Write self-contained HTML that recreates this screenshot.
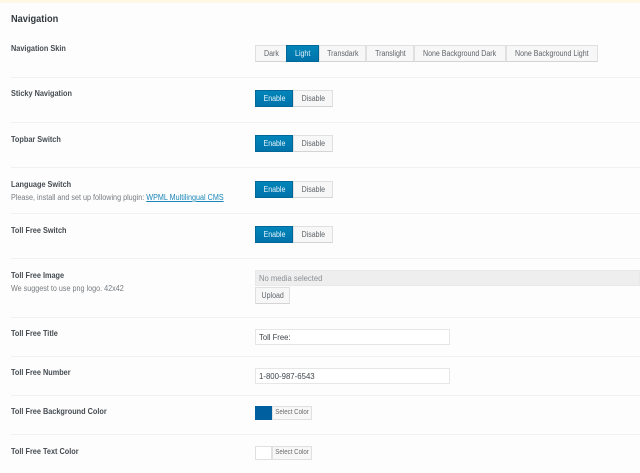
<!DOCTYPE html>
<html><head><meta charset="utf-8">
<style>
html,body{margin:0;padding:0;width:640px;height:473px;overflow:hidden;background:#fdfdfd;font-family:"Liberation Sans",sans-serif;}
body{position:relative;}
.a{position:absolute;white-space:nowrap;}
.band{left:0;top:0;width:640px;height:3px;background:#fff8e6;}
h2{position:absolute;left:11px;top:12.5px;margin:0;font-size:10.5px;line-height:13px;font-weight:bold;color:#32393f;transform:scaleX(.88);transform-origin:0 0;}
.l{position:absolute;left:11px;font-size:8.5px;line-height:11px;font-weight:bold;color:#454b50;white-space:nowrap;transform:scaleX(.86);transform-origin:0 0;}
.d{position:absolute;left:11px;font-size:8px;line-height:11px;color:#777c80;white-space:nowrap;transform:scaleX(.9);transform-origin:0 0;}
.d a{color:#1a86b8;text-decoration:underline;}
.s{position:absolute;left:11px;width:629px;height:1px;background:#f1f1f1;}
.b{position:absolute;box-sizing:border-box;height:17px;line-height:15px;text-align:center;font-size:8px;color:#5f6469;background:#f7f7f7;border:1px solid #e0e0e0;border-bottom-color:#d4d4d4;white-space:nowrap;}
.b span{display:inline-block;transform:scaleX(.88);}
.on{background:linear-gradient(#0085ba,#0073aa);border-color:#006799;color:#e6f3f9;}
.i{position:absolute;box-sizing:border-box;left:255px;width:195px;height:16px;background:#fff;border:1px solid #e6e6e6;font-size:8.5px;line-height:14px;padding-left:3px;color:#40464b;white-space:nowrap;}
.i span{display:inline-block;transform:scaleX(.9);transform-origin:0 0;}
.sel{position:absolute;box-sizing:border-box;left:272px;width:40px;height:14px;line-height:12px;background:#f7f7f7;border:1px solid #e0e0e0;font-size:7px;color:#6a6a6a;text-align:center;white-space:nowrap;}
.sel span{display:inline-block;transform:scaleX(.88);}
.sw{position:absolute;box-sizing:border-box;left:255px;width:17px;height:14px;}
</style></head><body>
<div class="a band"></div>
<h2>Navigation</h2>

<div class="l" style="top:43px">Navigation Skin</div>
<div class="b" style="left:255px;top:45px;width:32px"><span>Dark</span></div>
<div class="b on" style="left:286px;top:45px;width:33px"><span>Light</span></div>
<div class="b" style="left:319px;top:45px;width:47px"><span>Transdark</span></div>
<div class="b" style="left:366px;top:45px;width:48px"><span>Translight</span></div>
<div class="b" style="left:414px;top:45px;width:92px"><span>None Background Dark</span></div>
<div class="b" style="left:506px;top:45px;width:92px"><span>None Background Light</span></div>
<div class="s" style="top:77px"></div>

<div class="l" style="top:88px">Sticky Navigation</div>
<div class="b on" style="left:255px;top:90px;width:38px"><span>Enable</span></div>
<div class="b" style="left:293px;top:90px;width:40px"><span>Disable</span></div>
<div class="s" style="top:122px"></div>

<div class="l" style="top:134px">Topbar Switch</div>
<div class="b on" style="left:255px;top:135px;width:38px"><span>Enable</span></div>
<div class="b" style="left:293px;top:135px;width:40px"><span>Disable</span></div>
<div class="s" style="top:167px"></div>

<div class="l" style="top:179px">Language Switch</div>
<div class="d" style="top:192px">Please, install and set up following plugin: <a>WPML Multilingual CMS</a></div>
<div class="b on" style="left:255px;top:181px;width:38px"><span>Enable</span></div>
<div class="b" style="left:293px;top:181px;width:40px"><span>Disable</span></div>
<div class="s" style="top:213px"></div>

<div class="l" style="top:225px">Toll Free Switch</div>
<div class="b on" style="left:255px;top:226px;width:38px"><span>Enable</span></div>
<div class="b" style="left:293px;top:226px;width:40px"><span>Disable</span></div>
<div class="s" style="top:258px"></div>

<div class="l" style="top:270px">Toll Free Image</div>
<div class="d" style="top:283px">We suggest to use png logo. 42x42</div>
<div class="i" style="top:270px;width:385px;background:#eeeeee;border-color:#e8e8e8;color:#8a8f93"><span>No media selected</span></div>
<div class="b" style="left:255px;top:287px;width:35px"><span>Upload</span></div>
<div class="s" style="top:317px"></div>

<div class="l" style="top:328px">Toll Free Title</div>
<div class="i" style="top:329px"><span>Toll Free:</span></div>
<div class="s" style="top:356px"></div>

<div class="l" style="top:367px">Toll Free Number</div>
<div class="i" style="top:368px"><span style="transform:scaleX(.92)">1-800-987-6543</span></div>
<div class="s" style="top:395px"></div>

<div class="l" style="top:406px">Toll Free Background Color</div>
<div class="sw" style="top:406px;background:#005f9e"></div>
<div class="sel" style="top:406px"><span>Select Color</span></div>
<div class="s" style="top:434px"></div>

<div class="l" style="top:446px">Toll Free Text Color</div>
<div class="sw" style="top:446px;background:#fff;border:1px solid #e0e0e0"></div>
<div class="sel" style="top:446px"><span>Select Color</span></div>
</body></html>
